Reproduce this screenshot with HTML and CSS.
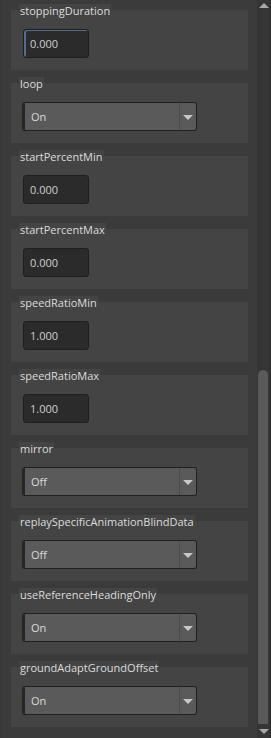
FILE: index.html
```html
<!DOCTYPE html>
<html>
	<head>
		<meta charset="UTF-8">
		<title>Attributes</title>
		<link rel="stylesheet" href="styles.css">
	</head>
	<body>
		<div class="panel">
			<div class="list">
				<div class="group">
					<div class="label">stoppingDuration</div>
					<div class="field focus">0.000</div>
				</div>
				<div class="group">
					<div class="label">loop</div>
					<div class="combo"><span class="value">On</span><span class="arrow"></span></div>
				</div>
				<div class="group">
					<div class="label">startPercentMin</div>
					<div class="field">0.000</div>
				</div>
				<div class="group">
					<div class="label">startPercentMax</div>
					<div class="field">0.000</div>
				</div>
				<div class="group">
					<div class="label">speedRatioMin</div>
					<div class="field">1.000</div>
				</div>
				<div class="group">
					<div class="label">speedRatioMax</div>
					<div class="field">1.000</div>
				</div>
				<div class="group">
					<div class="label">mirror</div>
					<div class="combo"><span class="value">Off</span><span class="arrow"></span></div>
				</div>
				<div class="group">
					<div class="label">replaySpecificAnimationBlindData</div>
					<div class="combo"><span class="value">Off</span><span class="arrow"></span></div>
				</div>
				<div class="group">
					<div class="label">useReferenceHeadingOnly</div>
					<div class="combo"><span class="value">On</span><span class="arrow"></span></div>
				</div>
				<div class="group">
					<div class="label">groundAdaptGroundOffset</div>
					<div class="combo"><span class="value">On</span><span class="arrow"></span></div>
				</div>
			</div>
			<div class="scrollbar">
				<div class="up"></div>
				<div class="track"><div class="thumb"></div></div>
				<div class="down"></div>
			</div>
		</div>
	</body>
</html>
```

FILE: styles.css
```css
*{padding: 0;margin: 0;box-sizing: border-box;}
html,body{height: 100%;}
body{background: #3b3b3b;font-family: "Open Sans", "DejaVu Sans", sans-serif;font-size: 11px;color: #d2d2d2;overflow: hidden;}

.panel{display: flex;height: 738px;border-left: 3px solid #393939;}
.list{width: 254px;padding: 10px 0 0 8px;display: flex;flex-direction: column;gap: 13px;}

.group{width: 237px;height: 60px;background: #444444;}
.label{width: fit-content;height: 13px;line-height: 13px;margin: -6px 0 0 8px;padding: 0 1px;background: #444444;color: #dcdcdc;white-space: nowrap;}

.field{width: 66px;height: 29px;margin: 12px 0 0 12px;border: 1px solid #1e1e1e;border-radius: 3px;background: #2b2b2b;padding-left: 6px;line-height: 27px;color: #cfcfcf;}
.field.focus{box-shadow: inset 2px 1px 0 #4f6f8c;}

.combo{display: flex;width: 175px;height: 29px;margin: 12px 0 0 11px;border: 1px solid #202020;border-left: 3px solid #262626;border-radius: 3px;background: #5a5a5a;}
.combo .value{flex: 1;padding-left: 6px;line-height: 27px;color: #dadada;}
.combo .arrow{width: 17px;border-left: 1px solid #4b4b4b;display: flex;align-items: center;justify-content: center;}
.combo .arrow::after{content: "";border-left: 5px solid transparent;border-right: 5px solid transparent;border-top: 5px solid #c8c8c8;margin-top: 1px;}

.scrollbar{width: 14px;display: flex;flex-direction: column;background: #353535;border-right: 1px solid #2a2a2a;}
.up,.down{height: 12px;display: flex;justify-content: center;}
.up::after{content: "";margin-top: 3px;border-left: 5px solid transparent;border-right: 5px solid transparent;border-bottom: 5px solid #a8a8a8;height: 0;}
.down::after{content: "";margin-top: 3px;border-left: 5px solid transparent;border-right: 5px solid transparent;border-top: 5px solid #a8a8a8;height: 0;}
.down{align-items: flex-start;}
.track{flex: 1;padding: 0 2px 0 1px;display: flex;flex-direction: column;justify-content: flex-end;}
.thumb{height: 354px;background: #5a5a5a;border-radius: 5px 5px 0 0;margin-bottom: 2px;}
```
